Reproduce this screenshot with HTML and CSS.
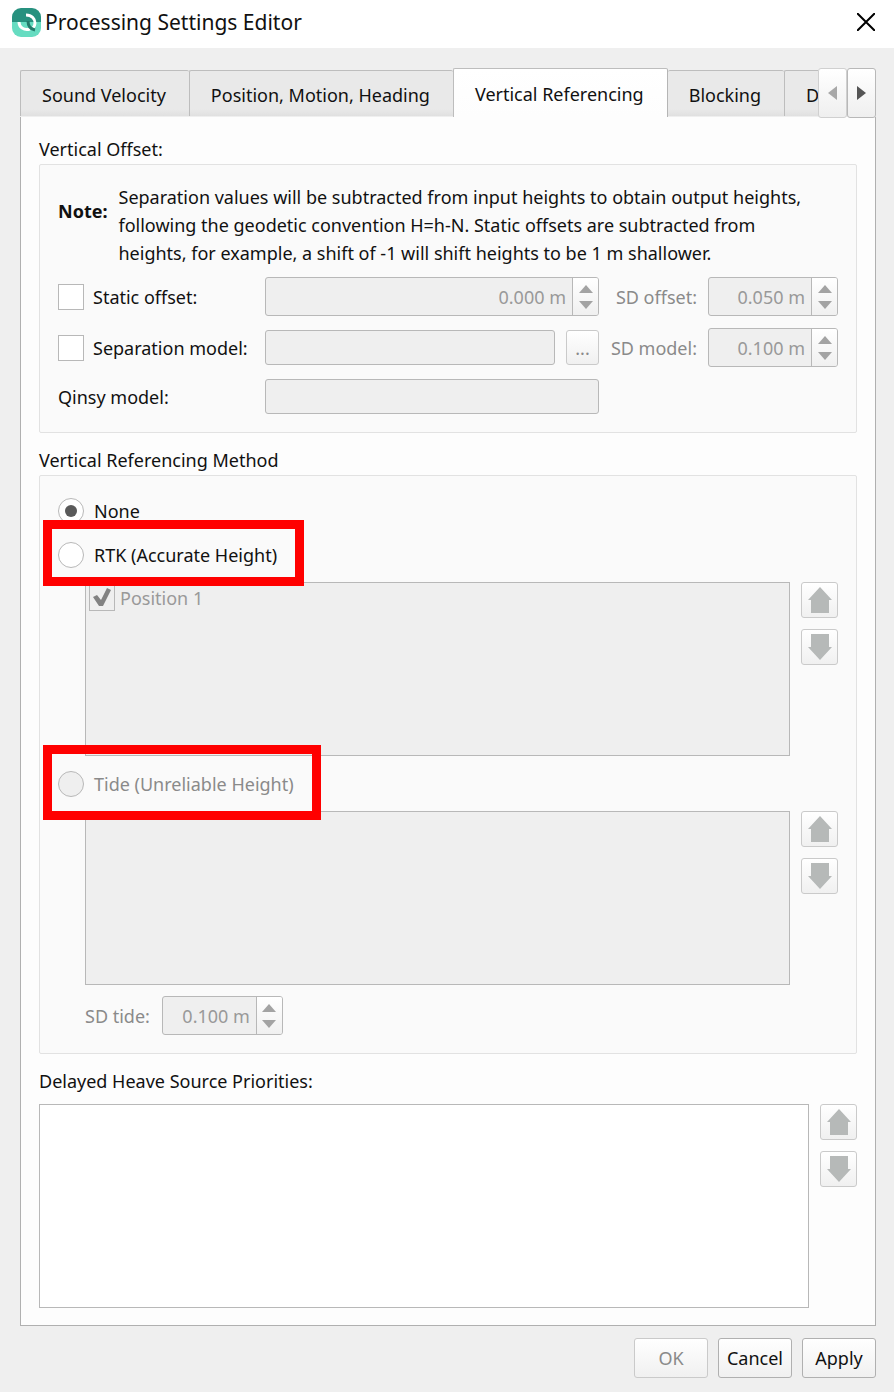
FILE: index.html
```html
<!DOCTYPE html>
<html lang="en">
<head>
  <meta charset="UTF-8">
  <meta name="viewport" content="width=device-width, initial-scale=1.0">
  <title>Processing Settings Editor</title>
  <link rel="stylesheet" href="styles.css">
</head>
<body>
  <svg class="sprite" aria-hidden="true">
    <symbol id="arrow-up" viewBox="0 0 26 26">
      <path d="M13 0 L25 13 H22 V26 H4 V13 H1 Z" fill="#b6b9b8"/>
    </symbol>
    <symbol id="arrow-down" viewBox="0 0 26 26">
      <path d="M13 26 L25 13 H22 V0 H4 V13 H1 Z" fill="#b6b9b8"/>
    </symbol>
  </svg>

  <header class="title-bar">
    <svg class="logo" viewBox="0 0 29 29" aria-hidden="true">
      <defs>
        <clipPath id="logo-shape"><rect width="29" height="29" rx="9"/></clipPath>
      </defs>
      <g clip-path="url(#logo-shape)">
        <rect width="29" height="15" fill="#27917f"/>
        <rect y="14" width="29" height="15" fill="#66dcc1"/>
        <path d="M14 7 C20 7 23 11 23 15 C23 17 22 19 21 20" fill="none" stroke="#fff" stroke-width="3"/>
        <path d="M7 14 C7 19 12 23 18 21" fill="none" stroke="#fff" stroke-width="3"/>
        <path d="M16 13 C16 18 18 21 23 22" fill="none" stroke="#237a6a" stroke-width="3"/>
      </g>
    </svg>
    <h1>Processing Settings Editor</h1>
    <button class="close" type="button" aria-label="Close">
      <svg viewBox="0 0 18 18"><path d="M0 0 L18 18 M18 0 L0 18" stroke="#000" stroke-width="2"/></svg>
    </button>
  </header>

  <main>
    <div class="tab-bar">
      <div class="tabs" role="tablist">
        <button class="tab" type="button" role="tab">Sound Velocity</button>
        <button class="tab" type="button" role="tab">Position, Motion, Heading</button>
        <button class="tab active" type="button" role="tab" aria-selected="true">Vertical Referencing</button>
        <button class="tab" type="button" role="tab">Blocking</button>
        <button class="tab" type="button" role="tab">D</button>
      </div>
      <button class="scroll" type="button" aria-label="Scroll tabs left" disabled><span class="left"></span></button>
      <button class="scroll" type="button" aria-label="Scroll tabs right"><span class="right"></span></button>
    </div>

    <div class="panel" role="tabpanel">
      <h2>Vertical Offset:</h2>
      <section class="group offsets">
        <div class="note">
          <b>Note:</b>
          <p>Separation values will be subtracted from input heights to obtain output heights,<br>
            following the geodetic convention H=h-N. Static offsets are subtracted from<br>
            heights, for example, a shift of -1 will shift heights to be 1 m shallower.</p>
        </div>

        <label class="check"><input type="checkbox"> Static offset:</label>
        <div class="spin">
          <input type="text" value="0.000 m" aria-label="Static offset" disabled>
          <div class="steps">
            <button type="button" class="up" aria-label="Increase" disabled></button>
            <button type="button" class="down" aria-label="Decrease" disabled></button>
          </div>
        </div>
        <label class="dim" for="sd-offset">SD offset:</label>
        <div class="spin">
          <input type="text" id="sd-offset" value="0.050 m" disabled>
          <div class="steps">
            <button type="button" class="up" aria-label="Increase" disabled></button>
            <button type="button" class="down" aria-label="Decrease" disabled></button>
          </div>
        </div>

        <label class="check"><input type="checkbox"> Separation model:</label>
        <div class="browse">
          <input class="field" type="text" aria-label="Separation model" disabled>
          <button class="button small" type="button" disabled>...</button>
        </div>
        <label class="dim" for="sd-model">SD model:</label>
        <div class="spin">
          <input type="text" id="sd-model" value="0.100 m" disabled>
          <div class="steps">
            <button type="button" class="up" aria-label="Increase" disabled></button>
            <button type="button" class="down" aria-label="Decrease" disabled></button>
          </div>
        </div>

        <label for="qinsy-model">Qinsy model:</label>
        <input class="field" type="text" id="qinsy-model" disabled>
      </section>

      <h2>Vertical Referencing Method</h2>
      <section class="group methods">
        <label class="radio"><input type="radio" name="method" checked> None</label>
        <label class="radio marked"><input type="radio" name="method"> RTK (Accurate Height)</label>
        <div class="list-row indent">
          <ul class="list disabled">
            <li><label><input type="checkbox" checked disabled> Position 1</label></li>
          </ul>
          <div class="order">
            <button class="button" type="button" aria-label="Move up" disabled><svg><use href="#arrow-up"/></svg></button>
            <button class="button" type="button" aria-label="Move down" disabled><svg><use href="#arrow-down"/></svg></button>
          </div>
        </div>
        <label class="radio marked tall dim"><input type="radio" name="method" disabled> Tide (Unreliable Height)</label>
        <div class="list-row indent">
          <ul class="list disabled"></ul>
          <div class="order">
            <button class="button" type="button" aria-label="Move up" disabled><svg><use href="#arrow-up"/></svg></button>
            <button class="button" type="button" aria-label="Move down" disabled><svg><use href="#arrow-down"/></svg></button>
          </div>
        </div>
        <div class="tide indent">
          <label class="dim" for="sd-tide">SD tide:</label>
          <div class="spin">
            <input type="text" id="sd-tide" value="0.100 m" disabled>
            <div class="steps">
              <button type="button" class="up" aria-label="Increase" disabled></button>
              <button type="button" class="down" aria-label="Decrease" disabled></button>
            </div>
          </div>
        </div>
      </section>

      <h2>Delayed Heave Source Priorities:</h2>
      <div class="list-row heave">
        <ul class="list"></ul>
        <div class="order">
          <button class="button" type="button" aria-label="Move up" disabled><svg><use href="#arrow-up"/></svg></button>
          <button class="button" type="button" aria-label="Move down" disabled><svg><use href="#arrow-down"/></svg></button>
        </div>
      </div>
    </div>

    <footer>
      <button class="button" type="button" disabled>OK</button>
      <button class="button" type="button">Cancel</button>
      <button class="button" type="button">Apply</button>
    </footer>
  </main>
</body>
</html>
```
FILE: styles.css
```css
* {
  box-sizing: border-box;
  margin: 0;
  padding: 0;
}

body {
  font-family: 'Noto Sans', 'Open Sans', sans-serif;
  font-size: 18px;
  line-height: 28px;
  color: #111;
  background-color: #efefef;
}

button,
input {
  font: inherit;
  color: inherit;
}

.sprite {
  display: none;
}

/* title bar */
.title-bar {
  display: flex;
  align-items: center;
  height: 48px;
  padding: 0 19px 4px 12px;
  background-color: #fff;
}

.logo {
  width: 29px;
  height: 29px;
  margin-right: 4px;
}

h1 {
  flex: 1;
  font-size: 21px;
  font-weight: normal;
}

.close {
  width: 18px;
  height: 18px;
  border: none;
  background: none;
}

.close svg {
  display: block;
  width: 18px;
  height: 18px;
}

main {
  padding: 20px 18px 14px 20px;
}

/* tabs */
.tab-bar {
  display: flex;
  height: 49px;
}

.tabs {
  display: flex;
  flex: 1;
  align-items: flex-start;
  min-width: 0;
  overflow: hidden;
}

.tab {
  flex: none;
  height: 46px;
  margin-top: 2px;
  padding: 2px 23px 0 21px;
  border: 1px solid #bdbdbd;
  border-right: none;
  border-bottom: none;
  border-radius: 2px 2px 0 0;
  background: linear-gradient(#e9e9e9 85%, #e0e0e0);
}

.tab.active {
  height: 49px;
  margin-top: 0;
  border-right: 1px solid #b5b5b5;
  background: linear-gradient(#fff, #fdfdfd);
}

.tab.active + .tab {
  border-left: none;
}

.scroll {
  display: flex;
  align-items: center;
  justify-content: center;
  width: 29px;
  height: 50px;
  border: 1px solid #b8b8b8;
  border-radius: 3px;
  background: linear-gradient(#fff, #efefef);
}

.scroll:disabled {
  border-color: #d0d0d0;
}

.left,
.right {
  border: 7px solid transparent;
}

.left {
  border-right: 9px solid #a8a8a8;
  border-left: none;
}

.right {
  border-left: 9px solid #555;
  border-right: none;
}

.panel {
  padding: 18px 18px 17px;
  border: 1px solid #b0b0b0;
  border-top: none;
  background-color: #fdfdfd;
}

h2 {
  margin-bottom: 1px;
  font-size: 18px;
  font-weight: normal;
}

.group {
  margin-bottom: 13px;
  padding: 18px;
  border: 1px solid #e2e2e2;
  border-radius: 2px;
  background-color: #fafafa;
}

.dim {
  color: #8a8a8a;
}

/* vertical offset */
.offsets {
  display: grid;
  grid-template-columns: 196px 1fr 87px 130px;
  gap: 12px 11px;
  align-items: center;
}

.offsets label {
  white-space: nowrap;
}

.offsets .dim {
  text-align: right;
}

.note {
  display: flex;
  grid-column: 1 / -1;
  gap: 11px;
  margin-bottom: -2px;
}

.note b {
  padding-top: 14px;
}

.note p {
  white-space: nowrap;
}

.check,
.list label {
  display: flex;
  align-items: center;
  gap: 9px;
}

input[type="checkbox"],
input[type="radio"] {
  appearance: none;
  flex: none;
  width: 26px;
  height: 26px;
  border: 1px solid #b8b8b8;
  background-color: #fff;
}

input[type="radio"] {
  display: grid;
  place-items: center;
  border-radius: 50%;
}

input[type="radio"]:checked::before {
  content: '';
  width: 12px;
  height: 12px;
  border-radius: 50%;
  background-color: #5a5a5a;
}

input[type="checkbox"]:disabled,
input[type="radio"]:disabled {
  background-color: #efefef;
}

input[type="checkbox"]:checked::before {
  content: '';
  display: block;
  width: 24px;
  height: 24px;
  background-color: #828282;
  clip-path: polygon(3px 11px, 7px 9px, 11px 14px, 17px 2px, 21px 4px, 13px 20px, 9px 20px);
}

.field,
.spin {
  width: 100%;
  border: 1px solid #b8b8b8;
  border-radius: 3px;
  background-color: #efefef;
}

.field {
  height: 35px;
  min-width: 0;
}

.spin {
  display: flex;
  height: 39px;
  overflow: hidden;
}

.spin input {
  flex: 1;
  min-width: 0;
  padding-right: 6px;
  border: none;
  background: none;
  color: #999;
  text-align: right;
}

.steps {
  display: flex;
  flex-direction: column;
  gap: 8px;
  align-items: center;
  justify-content: center;
  width: 26px;
  border-left: 1px solid #b8b8b8;
  background: linear-gradient(#fff, #f0f0f0);
}

.steps button {
  width: 0;
  height: 0;
  border: 7px solid transparent;
  background: none;
}

.steps .up {
  border-top: none;
  border-bottom: 8px solid #a3a3a3;
}

.steps .down {
  border-top: 8px solid #a3a3a3;
  border-bottom: none;
}

.browse {
  display: flex;
  gap: 11px;
}

/* push buttons */
.button {
  border: 1px solid #b0b0b0;
  border-radius: 3px;
  background: linear-gradient(#fff, #f0f0f0);
}

.button:disabled {
  border-color: #cacaca;
  color: #8a8a8a;
}

.small {
  flex: none;
  width: 33px;
}

/* referencing method */
.methods {
  display: flex;
  flex-direction: column;
  align-items: flex-start;
  gap: 11px;
}

.radio {
  position: relative;
  display: flex;
  align-items: center;
  gap: 10px;
  height: 33px;
}

.marked::after {
  content: '';
  position: absolute;
  z-index: 1;
  inset: -18px -27px -15px -15px;
  border: 9px solid #f00;
  pointer-events: none;
}

.marked.tall::after {
  inset: -22px -27px -20px -15px;
}

.indent {
  padding-left: 27px;
}

.list-row {
  display: flex;
  gap: 11px;
  width: 100%;
}

.list {
  flex: 1;
  height: 174px;
  padding: 1px 3px;
  border: 1px solid #b8b8b8;
  background-color: #fff;
  list-style: none;
}

.list.disabled {
  background-color: #efefef;
  color: #999;
}

.list label {
  gap: 5px;
}

.order {
  display: flex;
  flex-direction: column;
  gap: 11px;
}

.order .button {
  display: grid;
  place-items: center;
  width: 37px;
  height: 36px;
}

.order svg {
  width: 26px;
  height: 26px;
}

.tide {
  display: flex;
  align-items: center;
  gap: 12px;
}

.tide .spin {
  width: 121px;
}

.heave {
  padding-top: 8px;
}

.heave .list {
  height: 204px;
}

footer {
  display: flex;
  justify-content: flex-end;
  gap: 10px;
  margin-top: 12px;
}

footer .button {
  width: 74px;
  height: 40px;
}
```
